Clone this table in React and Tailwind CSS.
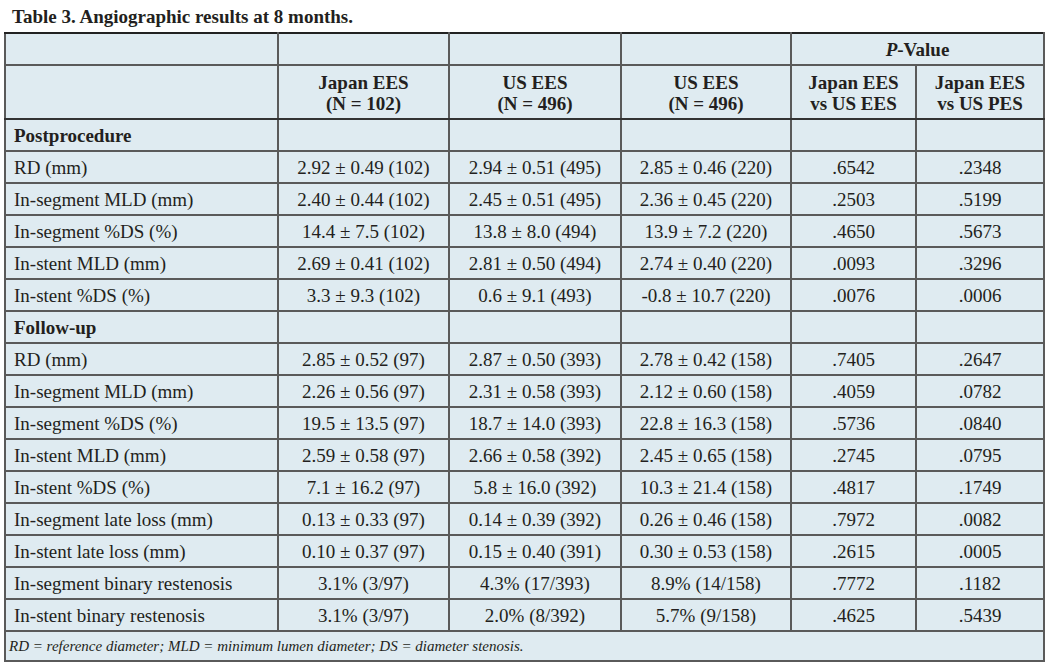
import React from "react";

const post = [
  ["RD (mm)", "2.92 ± 0.49 (102)", "2.94 ± 0.51 (495)", "2.85 ± 0.46 (220)", ".6542", ".2348"],
  ["In-segment MLD (mm)", "2.40 ± 0.44 (102)", "2.45 ± 0.51 (495)", "2.36 ± 0.45 (220)", ".2503", ".5199"],
  ["In-segment %DS (%)", "14.4 ± 7.5 (102)", "13.8 ± 8.0 (494)", "13.9 ± 7.2 (220)", ".4650", ".5673"],
  ["In-stent MLD (mm)", "2.69 ± 0.41 (102)", "2.81 ± 0.50 (494)", "2.74 ± 0.40 (220)", ".0093", ".3296"],
  ["In-stent %DS (%)", "3.3 ± 9.3 (102)", "0.6 ± 9.1 (493)", "-0.8 ± 10.7 (220)", ".0076", ".0006"],
];

const follow = [
  ["RD (mm)", "2.85 ± 0.52 (97)", "2.87 ± 0.50 (393)", "2.78 ± 0.42 (158)", ".7405", ".2647"],
  ["In-segment MLD (mm)", "2.26 ± 0.56 (97)", "2.31 ± 0.58 (393)", "2.12 ± 0.60 (158)", ".4059", ".0782"],
  ["In-segment %DS (%)", "19.5 ± 13.5 (97)", "18.7 ± 14.0 (393)", "22.8 ± 16.3 (158)", ".5736", ".0840"],
  ["In-stent MLD (mm)", "2.59 ± 0.58 (97)", "2.66 ± 0.58 (392)", "2.45 ± 0.65 (158)", ".2745", ".0795"],
  ["In-stent %DS (%)", "7.1 ± 16.2 (97)", "5.8 ± 16.0 (392)", "10.3 ± 21.4 (158)", ".4817", ".1749"],
  ["In-segment late loss (mm)", "0.13 ± 0.33 (97)", "0.14 ± 0.39 (392)", "0.26 ± 0.46 (158)", ".7972", ".0082"],
  ["In-stent late loss (mm)", "0.10 ± 0.37 (97)", "0.15 ± 0.40 (391)", "0.30 ± 0.53 (158)", ".2615", ".0005"],
  ["In-segment binary restenosis", "3.1% (3/97)", "4.3% (17/393)", "8.9% (14/158)", ".7772", ".1182"],
  ["In-stent binary restenosis", "3.1% (3/97)", "2.0% (8/392)", "5.7% (9/158)", ".4625", ".5439"],
];

const cell = "border-2 border-[#5a5a5a] px-2";

const DataRow = ({ row }) => (
  <tr className="h-[32px] leading-none">
    <td className={cell + " text-left"}>{row[0]}</td>
    {row.slice(1).map((v, i) => (
      <td key={i} className={cell + " text-center"}>{v}</td>
    ))}
  </tr>
);

const SectionRow = ({ label }) => (
  <tr className="h-[32px] leading-none">
    <td className={cell + " text-left font-bold"}>{label}</td>
    <td className={cell}></td>
    <td className={cell}></td>
    <td className={cell}></td>
    <td className={cell}></td>
    <td className={cell}></td>
  </tr>
);

const head = cell + " border-b-[#333] font-bold leading-[21px] pt-[1px]";

export default function App() {
  return (
    <div className="w-[1048px] h-[665px] bg-white text-[#231f20] font-['Liberation_Serif',serif]">
      <div className="pt-[5px] pl-[12px] h-[32px] text-[19px] leading-[24px] font-bold">
        Table 3. Angiographic results at 8 months.
      </div>
      <div className="pl-[4px]">
        <table className="w-[1039px] table-fixed border-collapse bg-[#dfebf1] text-[19px]">
          <colgroup>
            <col className="w-[273px]" />
            <col className="w-[171px]" />
            <col className="w-[172px]" />
            <col className="w-[170px]" />
            <col className="w-[125px]" />
            <col className="w-[128px]" />
          </colgroup>
          <thead>
            <tr className="h-[32px] leading-none">
              <th className={cell + " border-t-[#222]"}></th>
              <th className={cell + " border-t-[#222]"}></th>
              <th className={cell + " border-t-[#222]"}></th>
              <th className={cell + " border-t-[#222]"}></th>
              <th colSpan={2} className={cell + " border-t-[#222] text-center font-bold"}>
                <span className="italic">P</span>-Value
              </th>
            </tr>
            <tr className="h-[54px]">
              <th className={head}></th>
              <th className={head}>Japan EES<br />(N = 102)</th>
              <th className={head}>US EES<br />(N = 496)</th>
              <th className={head}>US EES<br />(N = 496)</th>
              <th className={head}>Japan EES<br />vs US EES</th>
              <th className={head}>Japan EES<br />vs US PES</th>
            </tr>
          </thead>
          <tbody>
            <SectionRow label="Postprocedure" />
            {post.map((r, i) => <DataRow key={"p" + i} row={r} />)}
            <SectionRow label="Follow-up" />
            {follow.map((r, i) => <DataRow key={"f" + i} row={r} />)}
            <tr className="h-[30px] leading-none">
              <td colSpan={6} className={cell + " text-left italic text-[15px] px-[3px]"}>
                RD = reference diameter; MLD = minimum lumen diameter; DS = diameter stenosis.
              </td>
            </tr>
          </tbody>
        </table>
      </div>
    </div>
  );
}
